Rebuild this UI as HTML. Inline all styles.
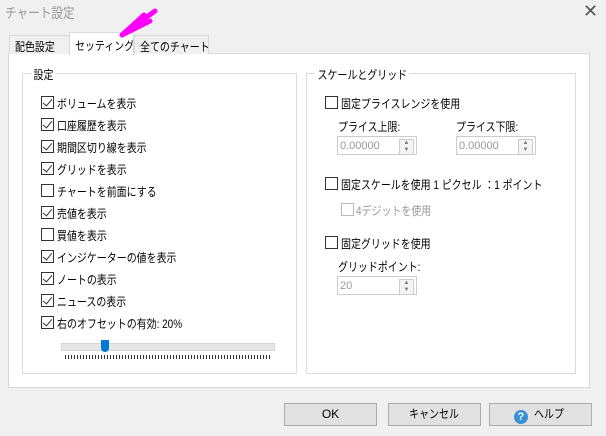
<!DOCTYPE html><html><head><meta charset="utf-8"><style>
body{margin:0;width:606px;height:436px;background:#f0f0f0;font-family:"Liberation Sans","Noto Sans CJK JP",sans-serif;font-size:12px;color:#000;position:relative;overflow:hidden}
.a{position:absolute;white-space:nowrap}
.t{transform:scaleX(0.83);transform-origin:0 0}
.cb{position:absolute;width:11px;height:11px;border:1px solid #333;background:#fff}
.cb.c::after{content:"";position:absolute;left:3px;top:0px;width:4px;height:8px;border:solid #333;border-width:0 1.5px 1.5px 0;transform:rotate(40deg)}
.grp{position:absolute;border:1px solid #dcdcdc}
.lg{position:absolute;top:-8px;left:8px;background:#fff;padding:0 3px;transform:scaleX(0.83);transform-origin:0 0}
.inp{position:absolute;width:80px;height:19px;border:1px solid #ccc;background:#fff;color:#999;font-size:11px;line-height:19px;padding-left:2px;box-sizing:border-box}
.sp{position:absolute;right:2px;top:2px;width:13px;height:14px;border:1px solid #ccc;background:#f4f4f4;font-size:6px;line-height:7px;text-align:center;color:#777}
.btn{position:absolute;top:403px;height:21px;border:1px solid #adadad;background:#e1e1e1;text-align:center;line-height:21px;font-size:12px}
.tab{position:absolute;border:1px solid #d9d9d9;border-bottom:none;overflow:hidden}
.tab span{position:absolute;left:5px;white-space:nowrap;transform:scaleX(0.83);transform-origin:0 0}
</style></head><body>
<div class="a t" style="left:5px;top:3px;font-size:14px;color:#999">チャート設定</div>
<div class="a" style="left:583px;top:1px;font-size:18px;color:#555">✕</div>
<div style="position:absolute;left:8px;top:53px;width:580px;height:333px;background:#fff;border:1px solid #d9d9d9"></div>
<div class="tab" style="left:9px;top:35px;width:59px;height:18px;background:#f0f0f0"><span style="top:2px">配色設定</span></div>
<div class="tab" style="left:69px;top:32px;width:63px;height:22px;background:#fff"><span style="top:4px">セッティング</span></div>
<div class="tab" style="left:134px;top:35px;width:73px;height:18px;background:#f0f0f0"><span style="top:2px">全てのチャート</span></div>
<svg class="a" style="left:110px;top:5px" width="50" height="35"><path d="M12 30 L45 6 M12 30 L40 16 M12 30 L34 10" stroke="#f0f" stroke-width="5" stroke-linecap="round" fill="none"/></svg>
<div class="grp" style="left:22px;top:73px;width:273px;height:299px"><span class="lg">設定</span></div>
<div class="grp" style="left:306px;top:73px;width:268px;height:299px"><span class="lg">スケールとグリッド</span></div>
<div class="cb c" style="left:41px;top:96px"></div><div class="a t" style="left:57px;top:95px">ボリュームを表示</div>
<div class="cb c" style="left:41px;top:118px"></div><div class="a t" style="left:57px;top:117px">口座履歴を表示</div>
<div class="cb c" style="left:41px;top:140px"></div><div class="a t" style="left:57px;top:139px">期間区切り線を表示</div>
<div class="cb c" style="left:41px;top:162px"></div><div class="a t" style="left:57px;top:161px">グリッドを表示</div>
<div class="cb" style="left:41px;top:184px"></div><div class="a t" style="left:57px;top:183px">チャートを前面にする</div>
<div class="cb c" style="left:41px;top:206px"></div><div class="a t" style="left:57px;top:205px">売値を表示</div>
<div class="cb" style="left:41px;top:228px"></div><div class="a t" style="left:57px;top:227px">買値を表示</div>
<div class="cb c" style="left:41px;top:250px"></div><div class="a t" style="left:57px;top:249px">インジケーターの値を表示</div>
<div class="cb c" style="left:41px;top:272px"></div><div class="a t" style="left:57px;top:271px">ノートの表示</div>
<div class="cb c" style="left:41px;top:294px"></div><div class="a t" style="left:57px;top:293px">ニュースの表示</div>
<div class="cb c" style="left:41px;top:316px"></div><div class="a t" style="left:57px;top:315px">右のオフセットの有効: 20%</div>
<div class="a" style="left:61px;top:343px;width:212px;height:6px;background:#e6e6e6;border:1px solid #d6d6d6"></div>
<div class="a" style="left:101px;top:340px;width:8px;height:12px;background:#0078d7;border-radius:0 0 4px 4px"></div>
<div class="a" style="left:65px;top:355px;width:206px;height:4px;background:repeating-linear-gradient(90deg,#333 0 1px,transparent 1px 3px)"></div>
<div class="cb" style="left:325px;top:96px"></div><div class="a t" style="left:341px;top:95px">固定プライスレンジを使用</div>
<div class="a t" style="left:338px;top:118px">プライス上限:</div><div class="a t" style="left:456px;top:118px">プライス下限:</div>
<div class="inp" style="left:337px;top:136px">0.00000<div class="sp">▲<br>▼</div></div>
<div class="inp" style="left:456px;top:136px">0.00000<div class="sp">▲<br>▼</div></div>
<div class="cb" style="left:325px;top:177px"></div><div class="a t" style="left:341px;top:176px">固定スケールを使用 1 ピクセル ：1 ポイント</div>
<div class="cb" style="left:341px;top:203px;border-color:#bbb"></div><div class="a t" style="left:356px;top:202px;color:#999">4デジットを使用</div>
<div class="cb" style="left:325px;top:236px"></div><div class="a t" style="left:341px;top:235px">固定グリッドを使用</div>
<div class="a t" style="left:338px;top:258px">グリッドポイント:</div>
<div class="inp" style="left:337px;top:276px">20<div class="sp">▲<br>▼</div></div>
<div class="btn" style="left:284px;width:91px">OK</div>
<div class="btn" style="left:388px;width:91px"><span style="display:inline-block;transform:scaleX(0.83)">キャンセル</span></div>
<div class="btn" style="left:489px;width:101px"><span style="display:inline-block;width:14px;height:14px;border-radius:50%;background:#3a8fd9;color:#fff;font-size:11px;line-height:14px;font-weight:bold;vertical-align:-2px">?</span> <span style="display:inline-block;transform:scaleX(0.83)">ヘルプ</span></div>
</body></html>
